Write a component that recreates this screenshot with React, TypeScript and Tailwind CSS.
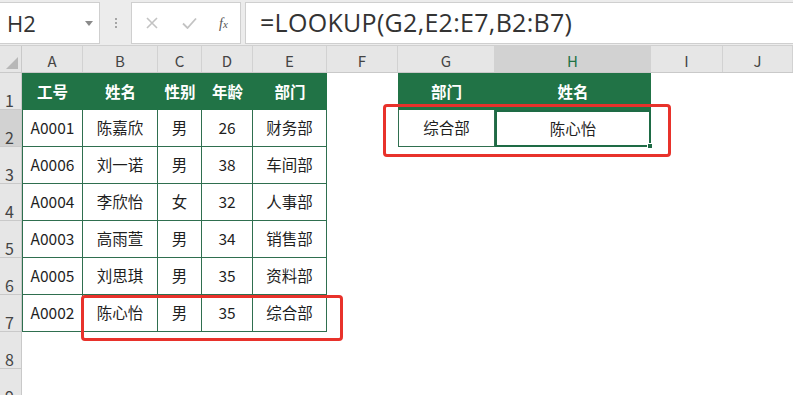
import React from "react";

const cols = [
  { k: "A", w: 61 },
  { k: "B", w: 75 },
  { k: "C", w: 44 },
  { k: "D", w: 51 },
  { k: "E", w: 74 },
  { k: "F", w: 71 },
  { k: "G", w: 97 },
  { k: "H", w: 156 },
  { k: "I", w: 72 },
  { k: "J", w: 70 },
];

const data = [
  ["A0001", "陈嘉欣", "男", "26", "财务部"],
  ["A0006", "刘一诺", "男", "38", "车间部"],
  ["A0004", "李欣怡", "女", "32", "人事部"],
  ["A0003", "高雨萱", "男", "34", "销售部"],
  ["A0005", "刘思琪", "男", "35", "资料部"],
  ["A0002", "陈心怡", "男", "35", "综合部"],
];

const font = { fontFamily: '"Noto Sans CJK SC", "Noto Sans", sans-serif' };

function RowHeader({ n, active }: { n: number; active?: boolean }) {
  return (
    <div
      className={`w-[22px] h-full shrink-0 border-r border-b border-[#c9c9c9] flex items-end pl-[5px] pb-[1px] text-[16px] leading-none text-[#444] ${
        active ? "bg-[#d2d2d2]" : "bg-[#e6e6e6]"
      }`}
    >
      {n}
    </div>
  );
}

function Cell({ w, children, cls = "" }: { w: number; children?: React.ReactNode; cls?: string }) {
  return (
    <div
      style={{ width: w }}
      className={`h-full shrink-0 flex items-center justify-center text-[15.5px] text-[#1f1f1f] ${cls}`}
    >
      {children}
    </div>
  );
}

export default function App() {
  const g = "border-[#2f6f4f]";
  return (
    <div className="relative w-[793px] h-[395px] bg-white overflow-hidden" style={font}>
      {/* Formula bar */}
      <div className="h-[46px] bg-[#ececec] flex items-start pt-[2px] border-b border-[#d0d0d0]">
        <div className="w-[100px] h-[42px] bg-white border border-[#cfcfcf] border-l-0 flex items-center justify-between pl-[7px] pr-[6px]">
          <span className="text-[22px] text-[#333]" style={{ fontFamily: '"Open Sans", "Noto Sans", sans-serif' }}>H2</span>
          <svg width="8" height="5" viewBox="0 0 8 5"><path d="M0 0h8L4 5z" fill="#8a8a8a" /></svg>
        </div>
        <div className="w-[31px] h-[42px] flex flex-col items-center justify-center gap-[2px]">
          <div className="w-[2px] h-[2px] bg-[#a5a5a5]" />
          <div className="w-[2px] h-[2px] bg-[#a5a5a5]" />
          <div className="w-[2px] h-[2px] bg-[#a5a5a5]" />
        </div>
        <div className="w-[110px] h-[42px] bg-white border border-[#cfcfcf] flex items-center">
          <svg className="ml-[14px]" width="12" height="12" viewBox="0 0 12 12">
            <path d="M1 1L11 11M11 1L1 11" stroke="#c3c3c3" strokeWidth="1.6" />
          </svg>
          <svg className="ml-[24px]" width="15" height="12" viewBox="0 0 15 12">
            <path d="M1 6.5L5.5 11L14 1.5" stroke="#c3c3c3" strokeWidth="1.8" fill="none" />
          </svg>
          <span className="ml-[22px] text-[14px] italic text-[#555]" style={{ fontFamily: '"Liberation Serif", serif' }}>
            f<span className="text-[11px]">x</span>
          </span>
        </div>
        <div className="ml-[4px] flex-1 h-[42px] bg-white border border-[#cfcfcf] border-r-0 flex items-center pl-[14px]">
          <span className="text-[25px] text-[#333] tracking-[0.3px]" style={{ fontFamily: '"Open Sans", "Noto Sans", sans-serif' }}>
            =LOOKUP(G2,E2:E7,B2:B7)
          </span>
        </div>
      </div>

      {/* Column headers */}
      <div className="h-[27px] flex bg-[#e6e6e6] border-b border-[#c9c9c9]">
        <div className="w-[22px] h-full shrink-0 border-r border-[#c9c9c9] relative">
          <svg className="absolute right-[3px] bottom-[3px]" width="12" height="12" viewBox="0 0 12 12">
            <path d="M12 0V12H0z" fill="#b8b8b8" />
          </svg>
        </div>
        {cols.map((c) => (
          <div
            key={c.k}
            style={{ width: c.w }}
            className={`h-full shrink-0 flex items-center justify-center pt-[4px] text-[15px] border-r border-[#d2d2d2] ${
              c.k === "H" ? "bg-[#d2d2d2] text-[#217346]" : "text-[#444]"
            }`}
          >
            {c.k}
          </div>
        ))}
      </div>

      {/* Row 1 */}
      <div className="h-[37px] flex">
        <RowHeader n={1} />
        {cols.slice(0, 5).map((c, i) => (
          <Cell key={c.k} w={c.w} cls="bg-[#217346] text-white font-bold">
            <span className="text-white">{["工号", "姓名", "性别", "年龄", "部门"][i]}</span>
          </Cell>
        ))}
        <Cell w={71} />
        <Cell w={97} cls="bg-[#217346] font-bold"><span className="text-white">部门</span></Cell>
        <Cell w={156} cls="bg-[#217346] font-bold"><span className="text-white">姓名</span></Cell>
        <Cell w={72} />
        <Cell w={70} />
      </div>

      {/* Data rows */}
      {data.map((r, ri) => (
        <div key={ri} className="h-[37px] flex">
          <RowHeader n={ri + 2} active={ri === 0} />
          {r.map((v, ci) => (
            <Cell
              key={ci}
              w={cols[ci].w}
              cls={`border-b border-r ${g} ${ci === 0 ? "border-l" : ""}`}
            >
              {v}
            </Cell>
          ))}
          <Cell w={71} />
          {ri === 0 ? (
            <>
              <Cell w={97} cls={`border-b border-l border-r ${g}`}>综合部</Cell>
              <Cell w={156} cls="relative border-2 border-[#1e6b45]">
                陈心怡
                <div className="absolute right-[-4px] bottom-[-4px] w-[6px] h-[6px] bg-[#1e6b45] border border-white" />
              </Cell>
            </>
          ) : (
            <>
              <Cell w={97} />
              <Cell w={156} />
            </>
          )}
          <Cell w={72} />
          <Cell w={70} />
        </div>
      ))}

      {/* Rows 8, 9 */}
      {[8, 9].map((n) => (
        <div key={n} className="h-[37px] flex">
          <RowHeader n={n} />
        </div>
      ))}

      {/* Red highlight boxes */}
      <div className="absolute left-[383px] top-[104px] w-[288px] h-[53px] border-[3px] border-[#e8322b] rounded-[4px] pointer-events-none" />
      <div className="absolute left-[81px] top-[295px] w-[262px] h-[46px] border-[3px] border-[#e8322b] rounded-[4px] pointer-events-none" />
    </div>
  );
}
